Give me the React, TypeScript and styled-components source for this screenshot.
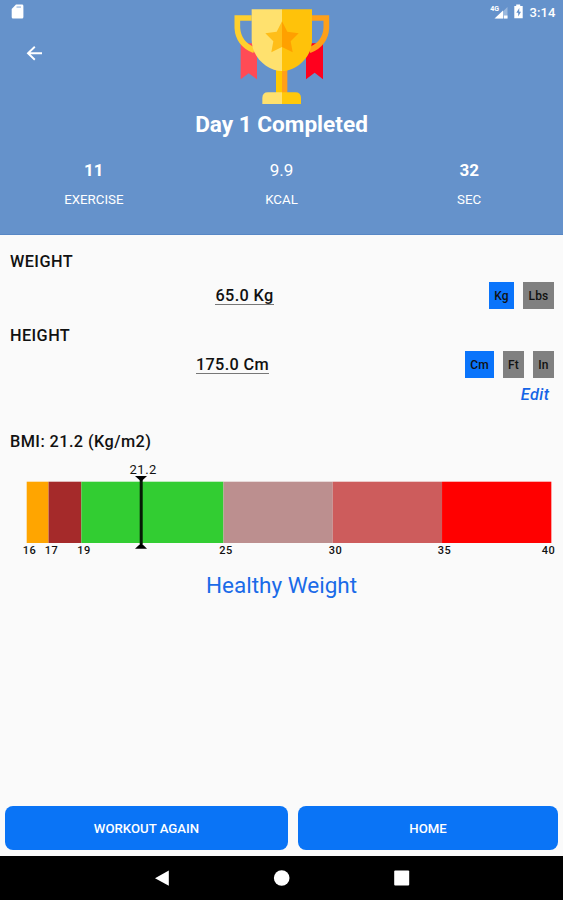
import React from "react";
import styled, { createGlobalStyle } from "styled-components";

const GlobalStyle = createGlobalStyle`
  * { box-sizing: border-box; }
  body { margin: 0; background: #fafafa; font-family: Roboto, "Liberation Sans", sans-serif; }
  svg { display: block; }
`;

const Screen = styled.div`
  width: 563px;
  height: 900px;
  display: flex;
  flex-direction: column;
  background: #fafafa;
  color: #111;
  overflow: hidden;
`;

const Header = styled.header`
  height: 234.5px;
  flex: none;
  background: #6592cb;
  border-bottom: 1px solid #5787c5;
  color: #fff;
`;

const HeaderTop = styled.div`
  display: grid;
  grid-template-columns: 220px 124px 219px;
  height: 110px;
`;

const HeaderStart = styled.div`
  display: flex;
  flex-direction: column;
  align-items: flex-start;
  gap: 26px;
  padding: 4px 0 0 11px;
`;

const BackButton = styled.button`
  border: 0;
  background: none;
  padding: 0;
  margin-left: 15px;
  color: #fff;
`;

const StatusIcons = styled.div`
  display: flex;
  justify-content: flex-end;
  height: 24px;
  padding-right: 7.5px;
`;

const Clock = styled.span`
  font-size: 13px;
  font-weight: 500;
  line-height: 25px;
  letter-spacing: 0.1px;
  margin-left: 4px;
`;

const Title = styled.h1`
  margin: 0;
  height: 30px;
  line-height: 30px;
  font-size: 22.6px;
  font-weight: 700;
  text-align: center;
`;

const Stats = styled.div`
  display: grid;
  grid-template-columns: repeat(3, 1fr);
  padding-top: 18px;
  text-align: center;
`;

const StatValue = styled.div<{ $bold?: boolean }>`
  font-size: 17px;
  line-height: 24px;
  font-weight: ${(p) => (p.$bold ? 700 : 400)};
`;

const StatLabel = styled.div`
  margin-top: 9px;
  font-size: 13.3px;
  line-height: 18px;
`;

const Main = styled.main`
  flex: 1;
  display: flex;
  flex-direction: column;
`;

const Heading = styled.h2<{ $top: number }>`
  margin: ${(p) => p.$top}px 0 0 10px;
  font-size: 16.3px;
  line-height: 20px;
  font-weight: 500;
  letter-spacing: 0.42px;
`;

const MeasureRow = styled.div<{ $top: number }>`
  display: flex;
  align-items: center;
  height: 27px;
  margin-top: ${(p) => p.$top}px;
  padding-right: 9px;
`;

const Measure = styled.div`
  flex: 1;
  text-align: center;
`;

const MeasureValue = styled.span`
  display: inline-block;
  font-size: 16.3px;
  font-weight: 500;
  line-height: 16px;
  letter-spacing: 0.35px;
  border-bottom: 1px solid #777;
`;

const Units = styled.div`
  display: flex;
  gap: 9px;
`;

const Unit = styled.button<{ $width: number; $active?: boolean }>`
  width: ${(p) => p.$width}px;
  height: 27px;
  padding: 1px 0 0;
  border: 0;
  font: 500 12px Roboto, sans-serif;
  letter-spacing: 0.2px;
  color: #111;
  background: ${(p) => (p.$active ? "#0a74fb" : "#808080")};
`;

const EditLink = styled.a`
  align-self: flex-end;
  margin: 7px 13.5px 0 0;
  font-size: 16.3px;
  line-height: 20px;
  font-weight: 500;
  font-style: italic;
  letter-spacing: 0.45px;
  color: #1464e6;
`;

const Chart = styled.svg`
  margin-top: 8px;
  flex: none;
  font-family: Roboto, sans-serif;
`;

const Result = styled.div`
  margin-top: 10px;
  text-align: center;
  font-size: 22.5px;
  line-height: 30px;
  color: #1a6be8;
`;

const Actions = styled.div`
  display: grid;
  grid-template-columns: 283px 260px;
  gap: 10px;
  margin-top: auto;
  padding: 0 5px 6px;
`;

const ActionButton = styled.button`
  height: 44px;
  border: 0;
  border-radius: 8px;
  background: #0a74f6;
  color: #fff;
  font: 500 13.2px Roboto, sans-serif;
`;

const NavBar = styled.nav`
  height: 44px;
  flex: none;
  background: #000;
`;

const Trophy = () => (
  <svg width="124" height="110" viewBox="0 0 372 330">
    <path d="M62 130H111V238L86 220L62 238Z" fill="#ff4b55" />
    <path d="M258 130H309V238L284 218L258 238Z" fill="#ff001e" />
    <path d="M95 54H52V84Q55 132 103 151" fill="none" stroke="#ffd02e" strokeWidth="17" />
    <path d="M276 54H319V84Q316 132 268 151" fill="none" stroke="#ffa019" strokeWidth="17" />
    <path d="M168 205H186V282H168Z" fill="#ffc800" />
    <path d="M186 205H202V282H186Z" fill="#ff9f19" />
    <path d="M95 28H186V213C145 213 95 174 95 119Z" fill="#ffe16e" />
    <path d="M186 28H276V119C276 174 227 213 186 213Z" fill="#ffc20a" />
    <path d="M186 64L170 95L136 100L160 124L154 157L186 141Z" fill="#ffbe19" />
    <path d="M186 64L202 95L236 100L212 124L218 157L186 141Z" fill="#ffa000" />
    <path d="M127 312V294Q127 277 144 277H186V312Z" fill="#ffe16e" />
    <path d="M186 277H226Q243 277 243 294V312H186Z" fill="#ffc80a" />
  </svg>
);

const bands = [
  { from: 16, to: 17, color: "#ffa500" },
  { from: 17, to: 18.5, color: "#a52a2a" },
  { from: 18.5, to: 25, color: "#32cd32" },
  { from: 25, to: 30, color: "#bc8f8f" },
  { from: 30, to: 35, color: "#cd5c5c" },
  { from: 35, to: 40, color: "#ff0000" },
];

const ticks = [
  { label: "16", x: 29.5 },
  { label: "17", x: 51.5 },
  { label: "19", x: 84 },
  { label: "25", x: 226 },
  { label: "30", x: 335.5 },
  { label: "35", x: 444.5 },
  { label: "40", x: 548.5 },
];

const toX = (bmi: number) => 26.7 + (bmi - 16) * 21.86;

const BmiChart = () => (
  <Chart width="563" height="100" viewBox="0 0 563 100">
    {bands.map((b) => (
      <rect key={b.from} x={toX(b.from)} y="21.7" width={toX(b.to) - toX(b.from)} height="61.3" fill={b.color} />
    ))}
    <rect x="139.7" y="20" width="3" height="64" fill="#061b06" />
    <path d="M135 16H147L141.2 21.5Z" fill="#000" />
    <path d="M135 88.8H147L141.2 83Z" fill="#000" />
    <text x="143.2" y="13.5" textAnchor="middle" fontSize="13" letterSpacing="0.5" fill="#111">
      21.2
    </text>
    {ticks.map((t) => (
      <text key={t.label} x={t.x} y="94" textAnchor="middle" fontSize="11" fontWeight="500" letterSpacing="0.4" fill="#111">
        {t.label}
      </text>
    ))}
  </Chart>
);

export default function App() {
  return (
    <>
      <GlobalStyle />
      <Screen>
        <Header>
          <HeaderTop>
            <HeaderStart>
              <svg width="14" height="16" viewBox="0 0 14 16">
                <path d="M5 0.6H11Q12.4 0.6 12.4 2V13Q12.4 14.5 11 14.5H2Q0.7 14.5 0.7 13V5Z" fill="#fff" />
                <path d="M5.5 2.2H10V4H5.5Z" fill="#b9cfeb" />
              </svg>
              <BackButton aria-label="Back">
                <svg width="17" height="15" viewBox="0 0 17 15">
                  <path d="M16 7.2H2M8.8 0.8L2 7.2L8.8 13.7" fill="none" stroke="#fff" strokeWidth="1.9" />
                </svg>
              </BackButton>
            </HeaderStart>
            <Trophy />
            <StatusIcons>
              <svg width="36" height="24" viewBox="0 0 36 24">
                <text x="0.2" y="10.5" fontFamily="Roboto" fontSize="7" fontWeight="700" fill="#fff">4G</text>
                <path d="M17.5 7V18.5H5.5Z" fill="#fff" fillOpacity="0.35" />
                <path d="M13 10.5V18.5H4.5Z" fill="#fff" />
                <path d="M14 15.5H17.5V18.5H14Z" fill="#fff" />
                <path d="M26.2 6V4.5H30.2V6H32.7V18.3H24.3V6Z" fill="#fff" />
                <path d="M29.3 8L26.3 12.8H28.2V16.5L31 11.7H29.2Z" fill="#6592cb" />
              </svg>
              <Clock>3:14</Clock>
            </StatusIcons>
          </HeaderTop>
          <Title>Day 1 Completed</Title>
          <Stats>
            <div>
              <StatValue $bold>11</StatValue>
              <StatLabel>EXERCISE</StatLabel>
            </div>
            <div>
              <StatValue>9.9</StatValue>
              <StatLabel>KCAL</StatLabel>
            </div>
            <div>
              <StatValue $bold>32</StatValue>
              <StatLabel>SEC</StatLabel>
            </div>
          </Stats>
        </Header>
        <Main>
          <Heading $top={17}>WEIGHT</Heading>
          <MeasureRow $top={10}>
            <Measure>
              <MeasureValue>65.0 Kg</MeasureValue>
            </Measure>
            <Units>
              <Unit $width={25} $active>Kg</Unit>
              <Unit $width={31}>Lbs</Unit>
            </Units>
          </MeasureRow>
          <Heading $top={17}>HEIGHT</Heading>
          <MeasureRow $top={5}>
            <Measure>
              <MeasureValue>175.0 Cm</MeasureValue>
            </Measure>
            <Units>
              <Unit $width={29} $active>Cm</Unit>
              <Unit $width={21}>Ft</Unit>
              <Unit $width={21}>In</Unit>
            </Units>
          </MeasureRow>
          <EditLink>Edit</EditLink>
          <Heading $top={27}>BMI: 21.2 (Kg/m2)</Heading>
          <BmiChart />
          <Result>Healthy Weight</Result>
          <Actions>
            <ActionButton>WORKOUT AGAIN</ActionButton>
            <ActionButton>HOME</ActionButton>
          </Actions>
        </Main>
        <NavBar>
          <svg width="563" height="44" viewBox="0 0 563 44">
            <path d="M168.8 14.5V29.8L155 22.2Z" fill="#fff" />
            <circle cx="281.7" cy="22" r="7.8" fill="#fff" />
            <rect x="394.2" y="14.5" width="15" height="15" rx="1" fill="#fff" />
          </svg>
        </NavBar>
      </Screen>
    </>
  );
}
